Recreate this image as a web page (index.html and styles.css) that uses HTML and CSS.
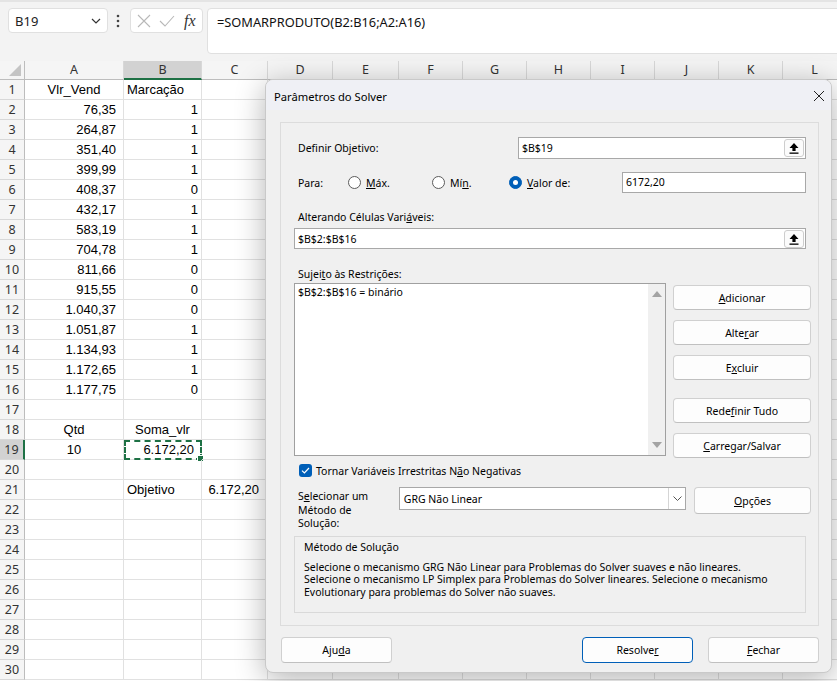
FILE: index.html
```html
<!DOCTYPE html>
<html lang="pt-BR">
<head>
    <meta charset="UTF-8">
    <title>Parâmetros do Solver</title>
    <link rel="stylesheet" href="styles.css">
</head>
<body>
    <div class="formula-area">
        <div class="name-box">
            <span>B19</span>
            <svg width="10" height="6" viewBox="0 0 10 6"><path d="M1 1 L5 5 L9 1" fill="none" stroke="#333" stroke-width="1.2"/></svg>
        </div>
        <svg class="dots" width="4" height="14" viewBox="0 0 4 14"><circle cx="2" cy="2" r="1.3" fill="#444"/><circle cx="2" cy="7" r="1.3" fill="#444"/><circle cx="2" cy="12" r="1.3" fill="#444"/></svg>
        <div class="fx-box">
            <svg width="14" height="14" viewBox="0 0 14 14"><path d="M1 1 L13 13 M13 1 L1 13" stroke="#b8b8b8" stroke-width="1.1"/></svg>
            <svg width="16" height="12" viewBox="0 0 16 12"><path d="M1 6 L6 11 L15 1" fill="none" stroke="#b8b8b8" stroke-width="1.1"/></svg>
            <span class="fx">fx</span>
        </div>
        <div class="formula-input">=SOMARPRODUTO(B2:B16;A2:A16)</div>
    </div>

    <div class="sheet">
        <div class="row col-heads">
            <div class="cell rh corner"><i class="select-all"></i></div>
            <div class="cell ch w-a">A</div>
            <div class="cell ch w-b active">B</div>
            <div class="cell ch w-c">C</div>
            <div class="cell ch w-d">D</div>
            <div class="cell ch w-e">E</div>
            <div class="cell ch w-n">F</div>
            <div class="cell ch w-n">G</div>
            <div class="cell ch w-n">H</div>
            <div class="cell ch w-n">I</div>
            <div class="cell ch w-n">J</div>
            <div class="cell ch w-n">K</div>
            <div class="cell ch w-n">L</div>
        </div>
        <div id="rows"></div>
    </div>

    <div class="dialog">
        <div class="dlg-title">
            <span>Parâmetros do Solver</span>
            <svg width="12" height="12" viewBox="0 0 12 12"><path d="M1 1 L11 11 M11 1 L1 11" stroke="#222" stroke-width="1"/></svg>
        </div>
        <div class="dlg-body">
            <div class="group">
                <div class="row-obj">
                    <span class="lbl">Definir Ob<u>j</u>etivo:</span>
                    <div class="ref-input obj-input">
                        <span>$B$19</span>
                        <span class="pick">
                            <svg width="10" height="12" viewBox="0 0 10 12"><path d="M5 1 L9.5 6 L6.6 6 L6.6 9 L3.4 9 L3.4 6 L0.5 6 Z" fill="#000"/><rect x="0.5" y="10.5" width="9" height="1.3" fill="#000"/></svg>
                        </span>
                    </div>
                </div>

                <div class="row-para">
                    <span class="para">Para:</span>
                    <span class="opt opt-max"><i class="radio"></i><span><u>M</u>áx.</span></span>
                    <span class="opt opt-min"><i class="radio"></i><span>Mí<u>n</u>.</span></span>
                    <span class="opt"><i class="radio on"></i><span><u>V</u>alor de:</span></span>
                    <div class="ref-input val-input"><span>6172,20</span></div>
                </div>

                <div class="lbl lbl-vars">Alterando Células Vari<u>á</u>veis:</div>
                <div class="ref-input vars-input">
                    <span>$B$2:$B$16</span>
                    <span class="pick">
                        <svg width="10" height="12" viewBox="0 0 10 12"><path d="M5 1 L9.5 6 L6.6 6 L6.6 9 L3.4 9 L3.4 6 L0.5 6 Z" fill="#000"/><rect x="0.5" y="10.5" width="9" height="1.3" fill="#000"/></svg>
                    </span>
                </div>

                <div class="lbl lbl-rest">Sujei<u>t</u>o às Restrições:</div>
                <div class="row-rest">
                    <div class="list-box">
                        <div class="list-items">$B$2:$B$16 = binário</div>
                        <div class="scroll">
                            <i class="tri up"></i>
                            <i class="tri down"></i>
                        </div>
                    </div>
                    <div class="side-buttons">
                        <div class="btn"><u>A</u>dicionar</div>
                        <div class="btn">Alte<u>r</u>ar</div>
                        <div class="btn">E<u>x</u>cluir</div>
                        <div class="btn btn-gap">Rede<u>f</u>inir Tudo</div>
                        <div class="btn"><u>C</u>arregar/Salvar</div>
                    </div>
                </div>

                <div class="row-check">
                    <span class="check">
                        <svg width="9" height="7" viewBox="0 0 9 7"><path d="M1 3.6 L3.4 6 L8 1" fill="none" stroke="#fff" stroke-width="1.2"/></svg>
                    </span>
                    <span>Tornar Variáveis Irrestritas N<u>ã</u>o Negativas</span>
                </div>

                <div class="row-method">
                    <div class="method-lbl">S<u>e</u>lecionar um<br>Método de<br>Solução:</div>
                    <div class="combo">
                        <span>GRG Não Linear</span>
                        <span class="combo-btn">
                            <svg width="9" height="5" viewBox="0 0 9 5"><path d="M0.5 0.5 L4.5 4.5 L8.5 0.5" fill="none" stroke="#555" stroke-width="1"/></svg>
                        </span>
                    </div>
                    <div class="btn btn-options"><u>O</u>pções</div>
                </div>

                <div class="method-box">
                    <div class="method-title">Método de Solução</div>
                    <p>Selecione o mecanismo GRG Não Linear para Problemas do Solver suaves e não lineares.<br>Selecione o mecanismo LP Simplex para Problemas do Solver lineares. Selecione o mecanismo<br>Evolutionary para problemas do Solver não suaves.</p>
                </div>
            </div>

            <div class="dlg-foot">
                <div class="btn foot-btn">Aju<u>d</u>a</div>
                <div class="btn foot-btn primary">Resolve<u>r</u></div>
                <div class="btn foot-btn"><u>F</u>echar</div>
            </div>
        </div>
    </div>

    <script src="sheet.js"></script>
</body>
</html>
```

FILE: sheet.js
```js
// rows 1..30 of the sheet: [A, B, C]
var data = {
    1: ['Vlr_Vend', 'Marcação', ''],
    2: ['76,35', '1'], 3: ['264,87', '1'], 4: ['351,40', '1'], 5: ['399,99', '1'],
    6: ['408,37', '0'], 7: ['432,17', '1'], 8: ['583,19', '1'], 9: ['704,78', '1'],
    10: ['811,66', '0'], 11: ['915,55', '0'], 12: ['1.040,37', '0'], 13: ['1.051,87', '1'],
    14: ['1.134,93', '1'], 15: ['1.172,65', '1'], 16: ['1.177,75', '0'],
    18: ['Qtd', 'Soma_vlr', ''],
    19: ['10', '6.172,20', ''],
    21: ['', 'Objetivo', '6.172,20']
};

var rows = document.getElementById('rows');
var widths = ['w-d', 'w-e', 'w-n', 'w-n', 'w-n', 'w-n', 'w-n', 'w-n', 'w-n'];

for (var r = 1; r <= 30; r++) {
    var d = data[r] || ['', '', ''];
    var row = document.createElement('div');
    row.className = 'row';

    var a = 'cell w-a', b = 'cell w-b', c = 'cell w-c';
    if (r >= 2 && r <= 16) { a += ' num'; b += ' right'; }
    if (r === 1) { a += ' center'; }
    if (r === 18) { a += ' center'; b += ' center'; }
    if (r === 19) { a += ' center'; b += ' right sel'; }
    if (r === 21) { c += ' right pad'; }

    var html = '<div class="cell rh' + (r === 19 ? ' active' : '') + '">' + r + '</div>';
    html += '<div class="' + a + '">' + d[0] + '</div>';
    html += '<div class="' + b + '">' + d[1] + (r === 19 ? '<i class="handle"></i>' : '') + '</div>';
    html += '<div class="' + c + '">' + (d[2] || '') + '</div>';
    for (var i = 0; i < widths.length; i++) {
        html += '<div class="cell ' + widths[i] + '"></div>';
    }
    row.innerHTML = html;
    rows.appendChild(row);
}
```

FILE: styles.css
```css
body {
    margin: 0;
    background: #fff;
    font-family: "Liberation Sans", Arial, sans-serif;
    overflow: hidden;
    width: 837px;
    height: 681px;
    position: relative;
}

/* formula bar */
.formula-area {
    height: 61px;
    background: #f3f3f3;
    border-top: 2px solid #e4e4e4;
    box-sizing: border-box;
    display: flex;
    align-items: flex-start;
    padding: 6px 0 0 8px;
    overflow: hidden;
    font-family: "Noto Sans", sans-serif;
}
.formula-area > * {
    flex: none;
}
.name-box {
    width: 100px;
    height: 25px;
    box-sizing: border-box;
    background: #fff;
    border: 1px solid #e0e0e0;
    border-radius: 4px;
    display: flex;
    align-items: center;
    justify-content: space-between;
    padding: 0 6px 0 6px;
    font-size: 13px;
    color: #222;
}
.dots {
    margin: 6px 10px 0 8px;
}
.fx-box {
    width: 73px;
    height: 25px;
    box-sizing: border-box;
    background: #fff;
    border: 1px solid #e0e0e0;
    border-radius: 4px;
    display: flex;
    align-items: center;
    gap: 8px;
    padding: 0 5px 0 6px;
}
.fx {
    font-family: "Liberation Serif", serif;
    font-style: italic;
    font-size: 16px;
    color: #333;
    margin-left: 1px;
}
.formula-input {
    margin-left: 4px;
    width: 700px;
    height: 46px;
    box-sizing: border-box;
    background: #fff;
    border: 1px solid #e0e0e0;
    border-radius: 4px;
    padding: 4px 9px;
    font-size: 12.8px;
    color: #111;
}

/* grid */
.row {
    display: flex;
    height: 20px;
}
.cell {
    flex: none;
    box-sizing: border-box;
    height: 20px;
    border-right: 1px solid #e1e1e1;
    border-bottom: 1px solid #e1e1e1;
    font-size: 13px;
    line-height: 19px;
    padding: 0 3px;
    white-space: nowrap;
    color: #000;
    position: relative;
}
.rh {
    width: 25px;
    background: #f5f5f5;
    border-right: 1px solid #bdbdbd;
    border-bottom: 1px solid #d8d8d8;
    font-family: "Noto Sans", sans-serif;
    font-size: 12.5px;
    text-align: center;
    color: #333;
    padding: 0;
}
.rh.active {
    background: #d2d2d2;
    border-right: 2px solid #1e7145;
}
.col-heads {
    height: 19px;
}
.col-heads .cell {
    height: 19px;
    line-height: 18px;
}
.ch {
    background: #f5f5f5;
    border-right: 1px solid #d8d8d8;
    border-bottom: 1px solid #bdbdbd;
    font-family: "Noto Sans", sans-serif;
    font-size: 12.5px;
    text-align: center;
    color: #333;
}
.ch.active {
    background: #d2d2d2;
    border-bottom: 2px solid #1e7145;
}
.corner {
    border-bottom: 1px solid #bdbdbd;
}
.select-all {
    position: absolute;
    right: 3px;
    bottom: 3px;
    width: 0;
    height: 0;
    border-left: 12px solid transparent;
    border-bottom: 12px solid #c4c4c4;
}
.w-a { width: 99px; }
.w-b { width: 78px; }
.w-c { width: 66px; }
.w-d { width: 65px; }
.w-e { width: 66px; }
.w-n { width: 64px; }
.center { text-align: center; }
.right { text-align: right; }
.num { text-align: right; padding-right: 7px; }
.pad { padding-right: 8px; }
.sel {
    padding-right: 7px;
    outline: 2px dashed #1e7145;
    outline-offset: -2px;
    line-height: 19px;
}
.handle {
    position: absolute;
    right: -3px;
    bottom: -3px;
    width: 5px;
    height: 5px;
    background: #1e7145;
    border: 1px solid #fff;
}

/* dialog */
.dialog {
    position: absolute;
    left: 265px;
    top: 79px;
    width: 567px;
    height: 594px;
    box-sizing: border-box;
    border: 1px solid #c9c9c9;
    border-radius: 8px;
    background: #f0f0f0;
    box-shadow: 0 6px 30px rgba(0, 0, 0, 0.3);
    font-family: "Noto Sans", sans-serif;
    font-size: 10.5px;
    color: #000;
    overflow: hidden;
}
.dlg-title {
    height: 30px;
    background: #eff0f5;
    display: flex;
    align-items: center;
    justify-content: space-between;
    padding: 2px 6px 0 8px;
    box-sizing: border-box;
    font-size: 11.2px;
}
.dlg-body {
    padding: 12px 12px 0 14px;
}
.group {
    height: 504px;
    box-sizing: border-box;
    border: 1px solid #dcdcdc;
    padding: 14px 12px 0 13px;
}
.lbl {
    margin-left: 4px;
}
.ref-input {
    background: #fff;
    border: 1px solid #a8a8a8;
    box-sizing: border-box;
    display: flex;
    align-items: center;
    justify-content: space-between;
    padding: 0 1px 0 3px;
}
.pick {
    width: 20px;
    height: 18px;
    box-sizing: border-box;
    border: 1px solid #cdcdcd;
    border-radius: 3px;
    background: #fbfbfb;
    display: flex;
    align-items: center;
    justify-content: center;
}
.row-obj {
    display: flex;
    align-items: center;
    justify-content: space-between;
    height: 21px;
}
.obj-input {
    width: 288px;
    height: 22px;
}
.row-para {
    display: flex;
    align-items: center;
    margin-top: 14px;
    height: 21px;
}
.para {
    margin-left: 4px;
    width: 50px;
}
.opt {
    display: flex;
    align-items: center;
    gap: 5px;
}
.opt-max { width: 84px; }
.opt-min { width: 77px; }
.radio {
    width: 13px;
    height: 13px;
    box-sizing: border-box;
    border: 1px solid #5c5c5c;
    border-radius: 50%;
    background: #fff;
    position: relative;
}
.radio.on {
    background: #005fb8;
    border-color: #005fb8;
}
.radio.on::after {
    content: "";
    position: absolute;
    left: 3px;
    top: 3px;
    width: 5px;
    height: 5px;
    border-radius: 50%;
    background: #fff;
}
.val-input {
    margin-left: auto;
    width: 184px;
    height: 21px;
    align-items: flex-start;
    padding-top: 2px;
}
.lbl-vars {
    margin-top: 17px;
    height: 14px;
    line-height: 14px;
}
.vars-input {
    margin-top: 4px;
    height: 21px;
}
.lbl-rest {
    margin-top: 18px;
    height: 14px;
    line-height: 14px;
}
.row-rest {
    display: flex;
    height: 173px;
    margin-top: 2px;
    margin-right: -5px;
}
.list-box {
    width: 372px;
    height: 173px;
    box-sizing: border-box;
    background: #fff;
    border: 1px solid #a0a0a0;
    display: flex;
}
.list-items {
    flex: 1;
    padding: 1px 3px;
}
.scroll {
    width: 17px;
    background: #f0f0f0;
    position: relative;
}
.tri {
    position: absolute;
    left: 4px;
    width: 0;
    height: 0;
    border-left: 5px solid transparent;
    border-right: 5px solid transparent;
}
.tri.up {
    top: 7px;
    border-bottom: 6px solid #a3a3a3;
}
.tri.down {
    bottom: 7px;
    border-top: 6px solid #a3a3a3;
}
.side-buttons {
    margin-left: 7px;
    padding-top: 2px;
    display: flex;
    flex-direction: column;
    gap: 10px;
}
.btn {
    width: 138px;
    height: 25px;
    flex: none;
    box-sizing: border-box;
    background: #fdfdfd;
    border: 1px solid #d0d0d0;
    border-bottom-color: #c0c0c0;
    border-radius: 4px;
    display: flex;
    align-items: center;
    justify-content: center;
}
.btn-gap {
    margin-top: 8px;
}
.row-check {
    display: flex;
    align-items: center;
    gap: 4px;
    margin: 7px 0 0 5px;
    height: 15px;
}
.check {
    width: 13px;
    height: 13px;
    border-radius: 3px;
    background: #005fb8;
    display: flex;
    align-items: center;
    justify-content: center;
}
.row-method {
    display: flex;
    align-items: flex-start;
    margin-top: 9px;
    margin-right: -5px;
}
.method-lbl {
    width: 95px;
    margin-left: 4px;
    padding-top: 3px;
    line-height: 13.5px;
}
.combo {
    margin-left: 6px;
    width: 288px;
    height: 23px;
    box-sizing: border-box;
    background: #fff;
    border: 1px solid #a8a8a8;
    display: flex;
    align-items: center;
    justify-content: space-between;
    padding-left: 4px;
}
.combo-btn {
    width: 17px;
    height: 21px;
    box-sizing: border-box;
    border-left: 1px solid #d5d5d5;
    display: flex;
    align-items: center;
    justify-content: center;
}
.btn-options {
    margin-left: 8px;
    width: 117px;
    height: 27px;
}
.method-box {
    margin-top: 5px;
    width: 512px;
    height: 77px;
    box-sizing: border-box;
    border: 1px solid #d9d9d9;
    padding: 3px 9px;
}
.method-title {
    line-height: 14px;
}
.method-box p {
    margin: 7px 0 0;
    line-height: 12.7px;
    white-space: nowrap;
}
.dlg-foot {
    display: flex;
    margin-top: 11px;
    margin-left: 1px;
}
.foot-btn {
    width: 111px;
    height: 26px;
}
.foot-btn.primary {
    margin-left: auto;
    border-color: #005fb8;
}
.foot-btn:last-child {
    margin-left: 15px;
    width: 111px;
}
```
